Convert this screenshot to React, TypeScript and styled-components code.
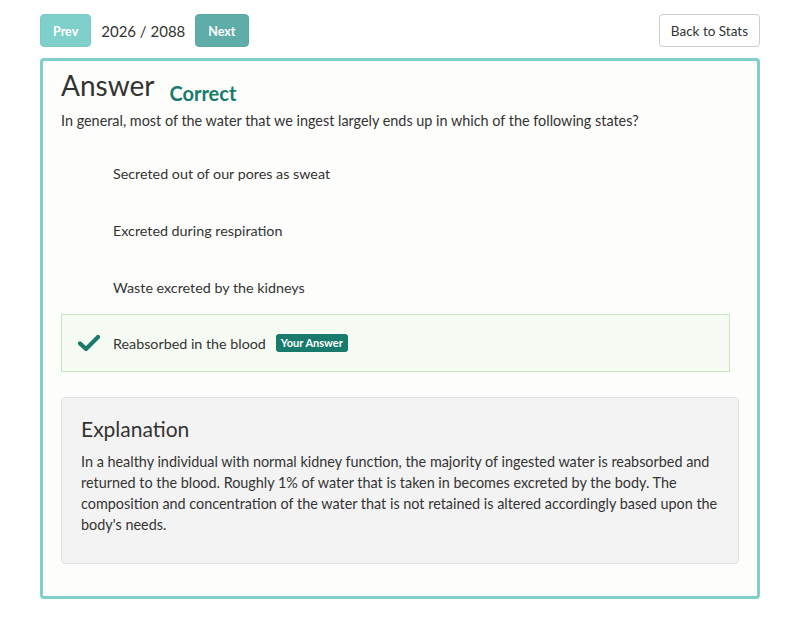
import React from "react";
import styled, { createGlobalStyle } from "styled-components";

const Global = createGlobalStyle`
  html, body { margin: 0; padding: 0; background: #ffffff; }
  body { font-family: Lato, "Open Sans", sans-serif; color: #333333; }
  * { box-sizing: border-box; }
`;

const Page = styled.div`
  width: 720px;
  margin: 0 40px;
  padding-top: 14px;
`;

const TopBar = styled.div`
  display: flex;
  align-items: center;
  height: 33px;
`;

const Pager = styled.div`
  display: flex;
  align-items: center;
  gap: 10px;
`;

const NavButton = styled.button<{ $dark?: boolean }>`
  height: 33px;
  padding: 0 12px;
  border: 1px solid ${(p) => (p.$dark ? "#5aa9a5" : "#79cac6")};
  border-radius: 4px;
  background: ${(p) => (p.$dark ? "#5fada9" : "#7fcfcb")};
  color: #ffffff;
  font-family: Lato, sans-serif;
  font-weight: 700;
  font-size: 12.5px;
  padding-top: 1px;
`;

const Counter = styled.span`
  font-size: 15px;
  color: #333;
`;

const Spacer = styled.div`
  flex: 1;
`;

const BackButton = styled.button`
  height: 33px;
  padding: 1px 11px 0 11px;
  border: 1px solid #cccccc;
  border-radius: 4px;
  background: #ffffff;
  color: #333;
  font-family: Lato, sans-serif;
  font-size: 13.5px;
`;

const Card = styled.div`
  margin-top: 11px;
  border: 3px solid #7fcfcb;
  border-radius: 4px;
  background: #fdfdfb;
  padding: 7px 18px 32px 18px;
`;

const TitleRow = styled.div`
  display: flex;
  align-items: flex-end;
  gap: 15px;
`;

const Title = styled.h1`
  margin: 0;
  font-size: 28px;
  font-weight: 400;
  line-height: 34px;
  color: #333;
`;

const Status = styled.span`
  font-size: 20px;
  font-weight: 700;
  line-height: 18px;
  color: #177a6a;
`;

const Question = styled.p`
  margin: 8px 0 0 0;
  font-size: 14.4px;
  line-height: 21px;
`;

const Options = styled.div`
  margin-top: 14px;
  margin-right: 9px;
  display: flex;
  flex-direction: column;
`;

const Option = styled.div<{ $selected?: boolean }>`
  display: flex;
  align-items: center;
  height: ${(p) => (p.$selected ? "58px" : "57px")};
  margin-top: ${(p) => (p.$selected ? "-2px" : "0")};
  padding-left: 16px;
  border: 1px solid ${(p) => (p.$selected ? "#c6e6bd" : "transparent")};
  background: ${(p) => (p.$selected ? "#f5fbf3" : "transparent")};
  font-size: 14.3px;
`;

const Mark = styled.span`
  width: 35px;
  display: flex;
  align-items: center;
`;

const Badge = styled.span`
  margin-left: 10px;
  padding: 2px 5px;
  border-radius: 3px;
  background: #177a6a;
  color: #ffffff;
  font-size: 11px;
  font-weight: 700;
  line-height: 14px;
`;

const Explanation = styled.div`
  margin-top: 25px;
  border: 1px solid #e3e3e3;
  border-radius: 4px;
  background: #f3f3f3;
  padding: 17px 19px 28px 19px;
`;

const ExplTitle = styled.h2`
  margin: 0 0 8px 0;
  font-size: 21px;
  font-weight: 400;
  line-height: 28px;
`;

const ExplText = styled.p`
  margin: 0;
  font-size: 14.4px;
  line-height: 21px;
`;

const Check = () => (
  <svg width="22" height="18" viewBox="0 0 22 18">
    <path d="M2 9.5 L8 15 L20 3" fill="none" stroke="#177a6a" strokeWidth="4.2" strokeLinecap="round" strokeLinejoin="round" />
  </svg>
);

export default function App() {
  return (
    <>
      <Global />
      <Page>
        <TopBar>
          <Pager>
            <NavButton>Prev</NavButton>
            <Counter>2026 / 2088</Counter>
            <NavButton $dark>Next</NavButton>
          </Pager>
          <Spacer />
          <BackButton>Back to Stats</BackButton>
        </TopBar>
        <Card>
          <TitleRow>
            <Title>Answer</Title>
            <Status>Correct</Status>
          </TitleRow>
          <Question>In general, most of the water that we ingest largely ends up in which of the following states?</Question>
          <Options>
            <Option><Mark />Secreted out of our pores as sweat</Option>
            <Option><Mark />Excreted during respiration</Option>
            <Option><Mark />Waste excreted by the kidneys</Option>
            <Option $selected>
              <Mark><Check /></Mark>
              Reabsorbed in the blood
              <Badge>Your Answer</Badge>
            </Option>
          </Options>
          <Explanation>
            <ExplTitle>Explanation</ExplTitle>
            <ExplText>
              In a healthy individual with normal kidney function, the majority of ingested water is reabsorbed and returned to the blood. Roughly 1% of water that is taken in becomes excreted by the body. The composition and concentration of the water that is not retained is altered accordingly based upon the body's needs.
            </ExplText>
          </Explanation>
        </Card>
      </Page>
    </>
  );
}
